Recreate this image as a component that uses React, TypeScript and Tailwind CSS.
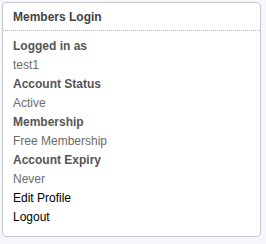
import React from 'react';

const rows: { text: string; kind: 'label' | 'value' | 'link' }[] = [
  { text: 'Logged in as', kind: 'label' },
  { text: 'test1', kind: 'value' },
  { text: 'Account Status', kind: 'label' },
  { text: 'Active', kind: 'value' },
  { text: 'Membership', kind: 'label' },
  { text: 'Free Membership', kind: 'value' },
  { text: 'Account Expiry', kind: 'label' },
  { text: 'Never', kind: 'value' },
  { text: 'Edit Profile', kind: 'link' },
  { text: 'Logout', kind: 'link' },
];

export default function App() {
  return (
    <div className="w-[266px] h-[244px] bg-[#f5f7fc] p-[2px] font-['Liberation_Sans',Arial,sans-serif] text-[12px]">
      <div className="w-[259px] h-[235px] bg-white border border-[#c8c8cc] rounded-[4px] flex flex-col">
        <div className="h-[28px] px-[10px] flex items-center font-bold text-[#444] border-b border-dotted border-[#b4b4b4]">
          Members Login
        </div>
        <div className="px-[10px] pt-[6px] flex flex-col">
          {rows.map((r) => (
            <div
              key={r.text}
              className={
                r.kind === 'label'
                  ? 'leading-[19px] font-bold text-[#555]'
                  : r.kind === 'value'
                  ? 'leading-[19px] text-[#6b6b6b]'
                  : 'leading-[19px] text-black cursor-pointer'
              }
            >
              {r.text}
            </div>
          ))}
        </div>
      </div>
    </div>
  );
}
